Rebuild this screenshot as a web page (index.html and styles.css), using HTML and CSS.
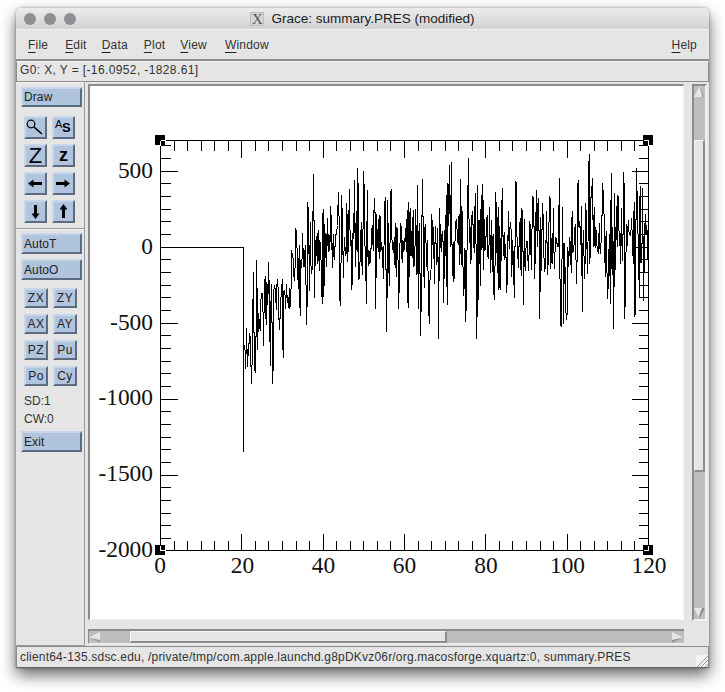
FILE: index.html
```html
<!DOCTYPE html>
<html lang="en">
<head>
<meta charset="utf-8">
<title>Grace: summary.PRES (modified)</title>
<link rel="stylesheet" href="styles.css">
</head>
<body>
<div class="window">
  <header class="titlebar">
    <div class="lights"><span class="light"></span><span class="light"></span><span class="light"></span></div>
    <div class="title"><span class="x-icon">X</span><span class="title-text">Grace: summary.PRES (modified)</span></div>
  </header>
  <nav class="menubar">
    <span class="menu m-file"><u>F</u>ile</span>
    <span class="menu m-edit"><u>E</u>dit</span>
    <span class="menu m-data"><u>D</u>ata</span>
    <span class="menu m-plot"><u>P</u>lot</span>
    <span class="menu m-view"><u>V</u>iew</span>
    <span class="menu m-window"><u>W</u>indow</span>
    <span class="menu m-help"><u>H</u>elp</span>
  </nav>
  <div class="locator">G0: X, Y = [-16.0952, -1828.61]</div>
  <div class="work">
    <aside class="panel">
      <button class="btn wide draw">Draw</button>
      <div class="icons">
        <button class="btn icon"><svg viewBox="0 0 23 23" class="glyph"><circle cx="7" cy="8" r="3.8" fill="none" stroke="#000" stroke-width="1.2"/><path d="M9.8 10.8L18 18" stroke="#000" stroke-width="1.6" fill="none"/></svg></button>
        <button class="btn icon as"><span class="as-a">A</span><span class="as-s">S</span></button>
        <button class="btn icon big-z">Z</button>
        <button class="btn icon small-z">z</button>
        <button class="btn icon"><svg viewBox="0 0 23 23" class="glyph"><path d="M4 11.5L9.5 7.5v2.5H18v3H9.5v2.5z"/></svg></button>
        <button class="btn icon"><svg viewBox="0 0 23 23" class="glyph"><path d="M18 11.5L12.5 7.5v2.5H4v3h8.500v2.500z"/></svg></button>
        <button class="btn icon"><svg viewBox="0 0 23 23" class="glyph"><path d="M11.500 19L7.500 13.500h2.500V5h3v8.500h2.500z"/></svg></button>
        <button class="btn icon"><svg viewBox="0 0 23 23" class="glyph"><path d="M11.500 4L7.500 9.500h2.500V18h3V9.500h2.500z"/></svg></button>
      </div>
      <div class="sep"></div>
      <button class="btn wide autot">AutoT</button>
      <button class="btn wide autoo">AutoO</button>
      <div class="smalls">
        <button class="btn small">ZX</button>
        <button class="btn small">ZY</button>
        <button class="btn small">AX</button>
        <button class="btn small">AY</button>
        <button class="btn small">PZ</button>
        <button class="btn small">Pu</button>
        <button class="btn small">Po</button>
        <button class="btn small">Cy</button>
      </div>
      <div class="stat first">SD:1</div>
      <div class="stat">CW:0</div>
      <button class="btn wide exit">Exit</button>
    </aside>
    <main class="main">
      <div class="view">
        <div class="canvas">
          <svg class="plot" viewBox="90 86 594 533" width="594" height="533">
            <path id="ticks" class="line" d=""/>
            <path id="frame" class="line" d="M160.5 140.5H648.5V550.5H160.5Z"/>
            <polyline id="series" class="line" points=""/>
            <g id="handles"></g>
            <g class="ylabels">
              <text x="153" y="178">500</text>
              <text x="153" y="254">0</text>
              <text x="153" y="330">-500</text>
              <text x="153" y="405">-1000</text>
              <text x="153" y="481">-1500</text>
              <text x="153" y="557">-2000</text>
            </g>
            <g class="xlabels">
              <text x="160" y="573">0</text>
              <text x="242.500" y="573">20</text>
              <text x="323.500" y="573">40</text>
              <text x="404.500" y="573">60</text>
              <text x="486" y="573">80</text>
              <text x="567.500" y="573">100</text>
              <text x="649" y="573">120</text>
            </g>
          </svg>
        </div>
        <div class="vscroll">
          <svg class="arrow-v" viewBox="0 0 11 11"><path d="M5.500 0L11 11H0z" fill="#e6e6e6"/><path d="M5.500 0L11 11H8z" fill="#a8a8a8"/></svg>
          <div class="vthumb"></div>
          <svg class="arrow-v down" viewBox="0 0 11 11"><path d="M0 0H11L5.500 11z" fill="#e6e6e6"/><path d="M11 0L5.500 11L5 8L8 0z" fill="#8e8e8e"/></svg>
        </div>
      </div>
      <div class="hscroll">
        <svg class="arrow-h" viewBox="0 0 11 11"><path d="M0 5.500L11 0V11z" fill="#e6e6e6"/><path d="M0 5.500L11 11V8z" fill="#9a9a9a"/></svg>
        <div class="hthumb"></div>
        <svg class="arrow-h right" viewBox="0 0 11 11"><path d="M11 5.500L0 0V11z" fill="#e6e6e6"/><path d="M11 5.500L0 11V8z" fill="#9a9a9a"/></svg>
      </div>
    </main>
  </div>
  <footer class="status">client64-135.sdsc.edu, /private/tmp/com.apple.launchd.g8pDKvz06r/org.macosforge.xquartz:0, summary.PRES
    <svg class="grip" viewBox="0 0 12 12"><path d="M12 1L1 12M12 5L5 12M12 9L9 12" stroke="#9a9a9a" fill="none"/></svg>
  </footer>
</div>
<script src="plot.js"></script>
</body>
</html>
```
FILE: styles.css
```css
* { box-sizing: border-box; }
html, body { margin: 0; background: #fff; }
body { padding: 8px 16px 0; width: 725px; height: 692px; overflow: hidden; font-family: "Liberation Sans", Arial, sans-serif; font-size: 12px; color: #222; }
.window { width: 693px; height: 660px; display: flex; flex-direction: column; background: #e5e5e5; border-radius: 5px 5px 0 0; box-shadow: 0 7px 16px rgba(0,0,0,.6), 0 0 3px rgba(0,0,0,.35); }
.titlebar { height: 22px; flex: none; position: relative; display: flex; align-items: center; justify-content: center; background: linear-gradient(#ececec, #d2d2d2); border-radius: 5px 5px 0 0; border-bottom: 1px solid #f2f2f2; }
.lights { position: absolute; left: 8px; top: 5px; display: flex; gap: 8px; }
.light { width: 12px; height: 12px; border-radius: 50%; background: #8f8f93; }
.title { display: flex; align-items: center; gap: 7px; }
.x-icon { width: 14px; height: 14px; background: #d6d6d6; border: 1px solid #bdbdbd; font: 15px/13px "Liberation Serif", serif; color: #555; text-align: center; }
.title-text { font-size: 13.5px; color: #1c1c1c; }
.menubar { height: 31px; flex: none; display: flex; align-items: center; background: #e5e5e5; border-bottom: 2px solid #8c8c8c; padding-left: 12px; padding-right: 12px; color: #333; letter-spacing: .2px; }
.menu u { text-decoration: underline; text-underline-offset: 3px; text-decoration-thickness: 1px; text-decoration-color: #222; }
.m-edit { margin-left: 17px; }
.m-data { margin-left: 15px; }
.m-plot { margin-left: 16px; }
.m-view { margin-left: 15px; }
.m-window { margin-left: 18px; }
.m-help { margin-left: auto; }
.locator { height: 21px; flex: none; border-bottom: 1px solid #8c8c8c; border-right: 1px solid #8c8c8c; border-top: 1px solid #f4f4f4; border-left: 1px solid #8c8c8c; padding: 1px 0 0 3px; line-height: 14px; color: #333; letter-spacing: .38px; }
.work { flex: 1; min-height: 0; display: flex; }
.panel { width: 69px; flex: none; border-right: 1px solid #9a9a9a; border-bottom: 1px solid #9a9a9a; border-top: 1px solid #f4f4f4; padding: 4px 0 0 5px; display: flex; flex-direction: column; }
.btn { display: block; padding: 0; border: 2px solid; border-color: #c8d6ea #5d6b80 #5d6b80 #c8d6ea; background: #b0c4de; color: #222; font: 12px "Liberation Sans", Arial, sans-serif; }
.wide { width: 61px; height: 21px; text-align: left; padding-left: 1px; letter-spacing: .1px; }
.draw { height: 20px; }
.icons { display: grid; grid-template-columns: 23px 23px; column-gap: 5px; row-gap: 5px; margin: 9px 0 0 3px; }
.icon { width: 23px; height: 23px; position: relative; overflow: hidden; color: #000; }
.glyph { position: absolute; left: -2px; top: -2px; width: 23px; height: 23px; }
.as { font-size: 11px; line-height: 12px; }
.as-a { position: absolute; left: 1px; top: 0; }
.as-s { position: absolute; left: 8px; top: 3px; font-size: 13px; line-height: 14px; font-weight: bold; }
.big-z { font-size: 22px; line-height: 19px; }
.small-z { font-size: 18px; font-weight: bold; line-height: 15px; }
.sep { height: 1px; background: #9a9a9a; margin: 5px 0 4px -5px; width: 68px; flex: none; box-shadow: 0 1px 0 #f4f4f4; }
.autot { margin-top: 0; }
.autoo { margin-top: 5px; }
.smalls { display: grid; grid-template-columns: 24px 24px; column-gap: 5px; row-gap: 6px; margin: 8px 0 0 3px; }
.small { width: 24px; height: 20px; text-align: center; letter-spacing: .5px; }
.stat { height: 18px; line-height: 18px; padding-left: 3px; color: #333; }
.stat.first { margin-top: 6px; }
.exit { margin-top: 3px; }
.main { flex: 1; min-width: 0; display: flex; flex-direction: column; padding: 2px 2px 1px 3px; }
.view { display: flex; height: 537px; flex: none; }
.canvas { width: 596px; height: 536px; flex: none; background: #fff; border-style: solid; border-width: 2px 1px 1px 2px; border-color: #8c8c8c #f4f4f4 #f4f4f4 #8c8c8c; overflow: hidden; }
.plot { display: block; }
.line { fill: none; stroke: #000; stroke-width: 1; shape-rendering: crispEdges; }
.ylabels text, .xlabels text { font-family: "Liberation Serif", "Times New Roman", serif; font-size: 23.4px; fill: #111; }
.ylabels text { text-anchor: end; }
.xlabels text { text-anchor: middle; }
.vscroll { width: 15px; height: 537px; margin-left: 8px; flex: none; background: #bebebe; border-style: solid; border-width: 2px 2px 2px 2px; border-color: #8c8c8c #f0f0f0 #f0f0f0 #8c8c8c; display: flex; flex-direction: column; padding-top: 0; }
.arrow-v { display: block; width: 11px; height: 11px; flex: none; }
.arrow-v.down { margin-top: auto; margin-bottom: 0; }
.vthumb { height: 332px; margin-top: 43px; flex: none; background: #e5e5e5; border-style: solid; border-width: 1px 2px 2px 1px; border-color: #f4f4f4 #8c8c8c #8c8c8c #f4f4f4; }
.hscroll { margin-top: 8px; width: 596px; height: 15px; flex: none; background: #bebebe; border-style: solid; border-width: 2px 0 1px 1px; border-color: #8c8c8c #f0f0f0 #f0f0f0 #8c8c8c; display: flex; align-items: center; }
.arrow-h { display: block; width: 11px; height: 11px; flex: none; }
.arrow-h.right { margin-left: auto; margin-right: 1px; }
.hthumb { width: 317px; height: 12px; margin-left: 30px; flex: none; background: #e5e5e5; border-style: solid; border-width: 1px 2px 2px 1px; border-color: #f4f4f4 #8c8c8c #8c8c8c #f4f4f4; }
.status { height: 22px; flex: none; position: relative; border: 1px solid #8c8c8c; border-top-color: #8c8c8c; border-bottom-color: #666; background: #e5e5e5; padding: 3px 0 0 3px; line-height: 14px; white-space: nowrap; color: #333; letter-spacing: .2px; }
.grip { position: absolute; right: 0; bottom: 0; width: 12px; height: 12px; background: #f2f2f2; }
```
FILE: plot.js
```js
(function () {
  var NS = "http://www.w3.org/2000/svg";
  var X0 = 160.5, X1 = 648.5, Y0 = 140.5, Y1 = 550.5;
  var XU = 4.0667, YZ = 247.3, YU = 76 / 500;

  // axis ticks: six minor intervals per major, on all four sides
  var d = "";
  function r(v) { return Math.floor(v) + 0.5; }
  var i, x, y, len;
  for (i = 1; i < 36; i++) {
    x = r(X0 + i * XU * 20 / 6);
    len = i % 6 === 0 ? 17 : 10;
    d += "M" + x + " " + Y0 + "v" + len + "M" + x + " " + Y1 + "v" + (-len);
  }
  for (i = -24; i <= 12; i++) {
    y = r(YZ - i * YU * 500 / 6);
    if (y <= Y0 || y >= Y1) continue;
    len = i % 6 === 0 ? 17 : 10;
    d += "M" + X0 + " " + y + "h" + len + "M" + X1 + " " + y + "h" + (-len);
  }
  document.getElementById("ticks").setAttribute("d", d);

  // selection handles
  var handles = document.getElementById("handles");
  [[X0, Y0, 1, 1], [X1, Y0, -1, 1], [X0, Y1, 1, -1], [X1, Y1, -1, -1]].forEach(function (h) {
    var cx = Math.floor(h[0]), cy = Math.floor(h[1]);
    var s = document.createElementNS(NS, "rect");
    s.setAttribute("x", cx - 5); s.setAttribute("y", cy - 5);
    s.setAttribute("width", 10); s.setAttribute("height", 10);
    s.setAttribute("shape-rendering", "crispEdges");
    handles.appendChild(s);
    var w = document.createElementNS(NS, "path");
    w.setAttribute("d", "M" + (cx + 0.5) + " " + (cy + 0.5) + "h" + (h[2] * 5) + "M" + (cx + 0.5) + " " + (cy + 0.5) + "v" + (h[3] * 5));
    w.setAttribute("stroke", "#fff");
    w.setAttribute("shape-rendering", "crispEdges");
    handles.appendChild(w);
  });

  // the noisy pressure trace, as pixel columns
  var seed = 20771;
  function rnd() { seed = (seed * 16807) % 2147483647; return seed / 2147483647; }
  function gauss() { return (rnd() + rnd() + rnd() + rnd() - 2) * 1.73; }
  var mean = [[243, 365], [252, 335], [262, 305], [285, 300], [300, 265], [315, 245], [648, 243]];
  function meanAt(px) {
    for (var k = 1; k < mean.length; k++) {
      if (px <= mean[k][0]) {
        var t = (px - mean[k - 1][0]) / (mean[k][0] - mean[k - 1][0]);
        return mean[k - 1][1] + t * (mean[k][1] - mean[k - 1][1]);
      }
    }
    return 243;
  }
  var pts = [];
  var sign = 1;
  for (var px = 244; px <= 648; px += 0.85) {
    sign = rnd() < 0.72 ? -sign : sign;
    var sd = px < 300 ? 22 : 28;
    var v = meanAt(px) + sign * Math.abs(gauss()) * sd;
    pts.push([px, v]);
  }
  var spikes = [
    [245,345],[252,383],[255,372],[257,260],[253,272],[264,285],[256,348],[270,365],[273,383],[283,357],
    [292,250],[296,228],[303,233],[307,324],[308,202],[313,220],[323,209],[322,303],
    [338,192],[340,305],[342,195],[347,203],[358,168],[364,171],[366,303],[367,190],[376,308],[385,197],
    [387,331],[391,189],[399,308],[417,185],[418,308],[421,335],[429,323],[439,338],[446,195],[447,304],
    [450,165],[451,162],[466,321],[468,158],[477,338],[483,184],[490,207],[495,299],[507,292],[514,297],
    [516,181],[524,304],[533,196],[540,318],[550,196],[559,178],[561,326],[566,319],[578,180],[582,311],
    [589,154],[592,191],[603,183],[608,298],[614,328],[615,193],[624,172],[625,318],[635,316],[637,168],[643,188]
  ];
  spikes.forEach(function (s) {
    var best = 0, bd = 1e9;
    pts.forEach(function (p, idx) {
      var dd = Math.abs(p[0] - s[0]);
      if (dd < bd) { bd = dd; best = idx; }
    });
    pts[best][1] = s[1];
  });
  var out = [[160.5, 247.5], [243.5, 247.5], [243.5, 452]];
  pts.forEach(function (p) { out.push([p[0], Math.round(p[1]) + 0.5]); });
  document.getElementById("series").setAttribute("points", out.map(function (p) { return p[0] + "," + p[1]; }).join(" "));
})();
```
